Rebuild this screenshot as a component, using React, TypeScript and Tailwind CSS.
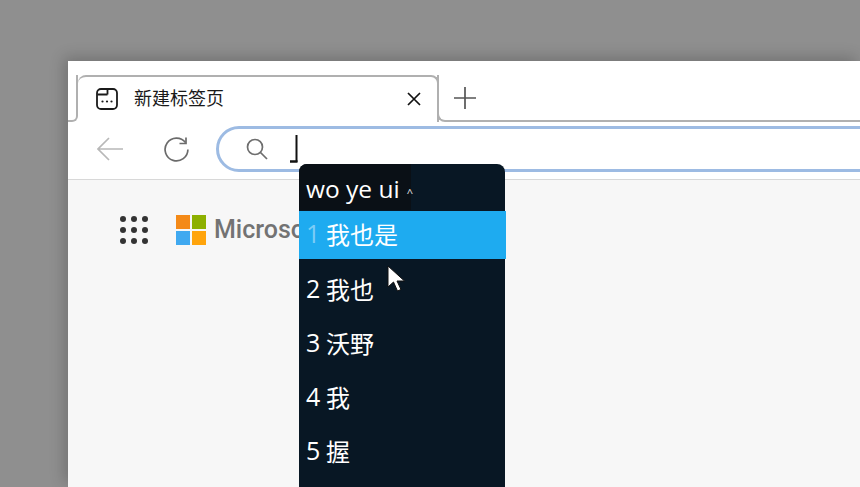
const LATIN = "font-['Open_Sans','Noto_Sans_CJK_SC',sans-serif]";

const ROWS = [
  ["2", "我也"],
  ["3", "沃野"],
  ["4", "我"],
  ["5", "握"],
];

function TabIcon() {
  return (
    <svg width="22" height="22" viewBox="0 0 22 22" fill="none" stroke="#1a1a1a" strokeWidth="1.8">
      <rect x="1" y="1" width="20" height="20" rx="4" />
      <path d="M1.5 6.5h10M11.5 1.5v5" />
      <circle cx="6.5" cy="13.5" r="1.1" fill="#1a1a1a" stroke="none" />
      <circle cx="11" cy="13.5" r="1.1" fill="#1a1a1a" stroke="none" />
      <circle cx="15.5" cy="13.5" r="1.1" fill="#1a1a1a" stroke="none" />
    </svg>
  );
}

function MsLogo() {
  return (
    <div className="grid grid-cols-2 gap-[2px] w-[30px] h-[30px] shrink-0">
      <div className="bg-[#f48a18]" />
      <div className="bg-[#8db000]" />
      <div className="bg-[#40a9f0]" />
      <div className="bg-[#ffa40c]" />
    </div>
  );
}

function Dots() {
  return (
    <div className="grid grid-cols-3 gap-[5px] w-[28px] shrink-0">
      {Array.from({ length: 9 }).map((_, i) => (
        <div key={i} className="w-[6px] h-[6px] rounded-full bg-[#333333]" />
      ))}
    </div>
  );
}

export default function App() {
  return (
    <div className={`relative w-[860px] h-[487px] overflow-hidden bg-[#8f8f8f] pl-[68px] pt-[61px] ${LATIN}`}>
      <div className="flex flex-col h-full overflow-hidden bg-white shadow-[-4px_-4px_14px_rgba(0,0,0,0.2)]">
        {/* Tab strip */}
        <div className="flex h-[61px] shrink-0 pt-[14px]">
          <div className="w-[10px] border-b-2 border-r-2 border-[#b0b0b0] rounded-br-[6px]" />
          <div className="flex items-center w-[361px] border-2 border-b-0 border-l-0 border-[#b0b0b0] rounded-t-[8px] pl-[18px] pr-[16px] pb-[2px]">
            <TabIcon />
            <span className="ml-[16px] -mt-[3px] text-[18px] text-[#1a1a1a] font-['Noto_Sans_CJK_SC',sans-serif]">新建标签页</span>
            <svg className="ml-auto" width="14" height="14" viewBox="0 0 14 14" stroke="#111111" strokeWidth="1.7">
              <path d="M1 1l12 12M13 1L1 13" />
            </svg>
          </div>
          <div className="flex-1 flex items-center border-b-2 border-l-2 border-[#b0b0b0] rounded-bl-[8px] -ml-[2px] pl-[15px]">
            <svg width="22" height="22" viewBox="0 0 22 22" stroke="#555555" strokeWidth="1.7">
              <path d="M11 0v22M0 11h22" />
            </svg>
          </div>
        </div>

        {/* Toolbar */}
        <div className="flex items-center h-[58px] shrink-0 border-b border-[#d8d8d8] pl-[29px] pb-[3px]">
          <svg width="26" height="24" viewBox="0 0 26 24" fill="none" stroke="#b8b8b8" strokeWidth="1.7">
            <path d="M26 12H1M12 1L1 12l11 11" />
          </svg>
          <svg className="ml-[41px]" width="25" height="25" viewBox="0 0 25 25" fill="none" stroke="#6b6b6b" strokeWidth="1.7">
            <path d="M21.5 5.5a11.4 11.4 0 1 0 2.4 7" />
            <path d="M22 .5v6h-6.500" />
          </svg>
          <div className="flex items-center flex-1 h-[46px] -mr-[40px] ml-[27px] border-[3px] border-[#9dbbe3] rounded-l-full pl-[27px]">
            <svg width="22" height="22" viewBox="0 0 22 22" fill="none" stroke="#6e6e6e" strokeWidth="1.7">
              <circle cx="9" cy="9" r="7.500" />
              <path d="M14.500 14.500L21 21" />
            </svg>
            <svg className="ml-[22px] -mt-[1px]" width="8" height="28" viewBox="0 0 8 28" fill="none" stroke="#111111">
              <path d="M6.500 0v27" strokeWidth="2" />
              <path d="M0 26.500h7.500" strokeWidth="2.500" />
            </svg>
          </div>
        </div>

        {/* Page */}
        <div className="flex-1 bg-[#f7f7f7] pl-[52px] pt-[35px]">
          <div className="flex items-center h-[30px]">
            <Dots />
            <div className="ml-[28px]"><MsLogo /></div>
            <span className="ml-[8px] w-[85px] whitespace-nowrap text-[25px] font-medium text-[#737373] font-['Roboto',sans-serif]">Microso</span>
          </div>
        </div>
      </div>

      {/* IME candidate popup */}
      <div className="absolute left-[299px] top-[164px] w-[206px] h-[340px] bg-[#081724] rounded-t-[8px] text-white">
        <div className="flex items-center w-[112px] h-[46px] bg-[#0a1016] rounded-tl-[8px] pl-[7px] pt-[4px] text-[24.500px] leading-none whitespace-nowrap">
          wo ye ui
          <span className="ml-[7px] mt-[6px] text-[11px] text-[#e8e8e8]">^</span>
        </div>
        <div className="flex items-center w-[207px] h-[48px] mt-[1px] bg-[#1eabf0] pl-[7px] pb-[2px] text-[24px] font-['Noto_Sans_CJK_SC',sans-serif]">
          <span className={`${LATIN} text-[25px] text-[#7ccdf6] w-[20px]`}>1</span>
          <span>我也是</span>
        </div>
        <div className="mt-[3px]">
          {ROWS.map(([n, t]) => (
            <div key={n} className="flex items-center h-[54px] pl-[7px] text-[24px] font-['Noto_Sans_CJK_SC',sans-serif]">
              <span className={`${LATIN} text-[25px] w-[20px]`}>{n}</span>
              <span>{t}</span>
            </div>
          ))}
        </div>
      </div>

      {/* Mouse pointer */}
      <svg className="absolute left-[387px] top-[265px]" width="19" height="28" viewBox="0 0 19 28">
        <path d="M1 1v21l5.500-5 4 9 3.500-1.500-4-8.500h7.500z" fill="#ffffff" stroke="#111111" strokeWidth="1" />
      </svg>
    </div>
  );
}
